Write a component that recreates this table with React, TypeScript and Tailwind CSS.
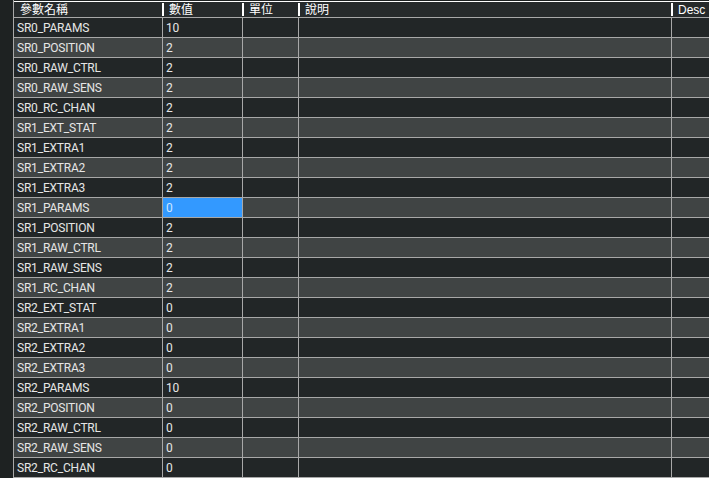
import React from "react";

const rows: [string, string][] = [
  ["SR0_PARAMS", "10"],
  ["SR0_POSITION", "2"],
  ["SR0_RAW_CTRL", "2"],
  ["SR0_RAW_SENS", "2"],
  ["SR0_RC_CHAN", "2"],
  ["SR1_EXT_STAT", "2"],
  ["SR1_EXTRA1", "2"],
  ["SR1_EXTRA2", "2"],
  ["SR1_EXTRA3", "2"],
  ["SR1_PARAMS", "0"],
  ["SR1_POSITION", "2"],
  ["SR1_RAW_CTRL", "2"],
  ["SR1_RAW_SENS", "2"],
  ["SR1_RC_CHAN", "2"],
  ["SR2_EXT_STAT", "0"],
  ["SR2_EXTRA1", "0"],
  ["SR2_EXTRA2", "0"],
  ["SR2_EXTRA3", "0"],
  ["SR2_PARAMS", "10"],
  ["SR2_POSITION", "0"],
  ["SR2_RAW_CTRL", "0"],
  ["SR2_RAW_SENS", "0"],
  ["SR2_RC_CHAN", "0"],
];

const cols = "grid grid-cols-[149px_80px_56px_373px_1fr]";
const dataFont = { fontFamily: 'Roboto, "Liberation Sans", Arial, sans-serif' };

function HeadCell({ label, bar }: { label: string; bar: boolean }) {
  return (
    <div className="flex items-center h-full">
      {bar && <div className="w-[2px] h-[13px] shrink-0 bg-white mr-[5px] -ml-px" />}
      <span className={bar ? "" : "pl-[6px]"}>{label}</span>
    </div>
  );
}

export default function App() {
  return (
    <div
      className="w-[709px] h-[478px] overflow-hidden bg-[#1e2222] flex"
      style={{ fontFamily: '"Liberation Sans", Arial, "Noto Sans CJK TC", sans-serif' }}
    >
      <div className="w-[13px] shrink-0 bg-[#1e2222]" />
      <div className="flex-1 flex flex-col border-l border-[#a8a8a8] text-[12px] text-[#e6e6e6]">
        <div className="h-[1px] shrink-0 bg-[#1e2222]" />
        <div className={`${cols} h-[17px] shrink-0 bg-[#262a2b] border-t border-white border-b border-b-[#a8a8a8] text-white leading-none`}>
          <HeadCell label="參數名稱" bar={false} />
          <HeadCell label="數值" bar={true} />
          <HeadCell label="單位" bar={true} />
          <HeadCell label="說明" bar={true} />
          <HeadCell label="Desc" bar={true} />
        </div>
        {rows.map(([name, val], i) => {
          const sel = name === "SR1_PARAMS";
          return (
            <div
              key={name}
              className={`${cols} h-[20px] shrink-0 border-b border-[#a8a8a8] text-[12px] tracking-[-0.2px] ${i % 2 === 0 ? "bg-[#222627]" : "bg-[#404444]"}`}
              style={dataFont}
            >
              <div className="flex items-center pl-[3px] border-r border-[#a8a8a8]">{name}</div>
              <div className={`flex items-center pl-[3px] border-r border-[#a8a8a8] ${sel ? "bg-[#3399ff] text-[#cfe6ff]" : ""}`}>{val}</div>
              <div className="border-r border-[#a8a8a8]" />
              <div className="border-r border-[#a8a8a8]" />
              <div />
            </div>
          );
        })}
      </div>
    </div>
  );
}
